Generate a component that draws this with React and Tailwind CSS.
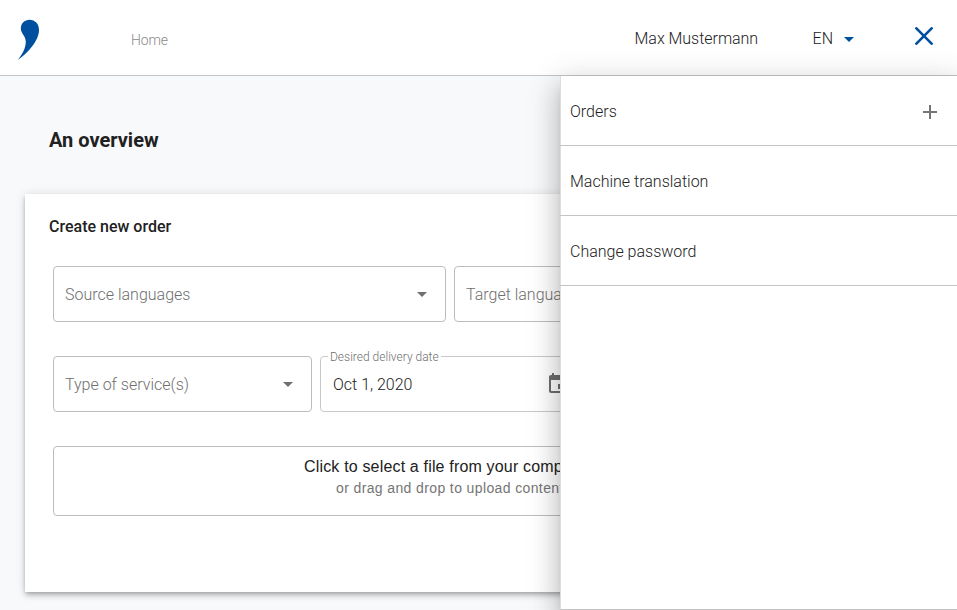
const Caret = ({ className }) => (
  <svg viewBox="0 0 10 5" width="10" height="5" className={className} fill="currentColor">
    <path d="M0 0h10L5 5z" />
  </svg>
);

const SelectField = ({ label, className }) => (
  <div className={`flex h-14 shrink-0 items-center justify-between rounded border border-[#bdbdbd] pr-[18px] pl-[11px] text-[#6f6f6f] ${className}`}>
    <span className="pt-0.5 whitespace-nowrap">{label}</span>
    <Caret className="shrink-0" />
  </div>
);

const MenuItem = ({ label, children }) => (
  <li className="-ml-px flex h-[70px] items-center justify-between border-b border-[#c4c4c4] pr-5 pl-2.5">
    <span className="pt-0.5">{label}</span>
    {children}
  </li>
);

export default function App() {
  return (
    <div className="relative h-[610px] w-[957px] overflow-hidden bg-[#f8f9fb] font-['Roboto',sans-serif] text-base leading-6 font-light text-[#212121]">
      <header className="flex h-[76px] items-center border-b border-[#c4c4c4] bg-white">
        <svg viewBox="0 0 22 42" width="22" height="42" className="ml-[17px] mt-[5px] shrink-0" fill="#0050a0">
          <path d="M12.500 .8C7.500 .8 3.800 4.500 3.800 9.500C3.800 14.500 8.600 16.500 8.800 22.500C8.800 29 5.500 35 .8 41C9.500 35 22 22.500 22 11C22 5 18 .8 12.500 .8z" />
        </svg>
        <nav className="ml-[92px] mt-[5px] text-sm leading-5 tracking-[-0.1px] text-[#8a8a8a]">Home</nav>
        <div className="ml-auto flex items-center pr-[24px]">
          <span className="mt-[3px] w-[124px] tracking-[-0.03px] whitespace-nowrap">Max Mustermann</span>
          <span className="mt-[3px] ml-[54px]">EN</span>
          <Caret className="mt-[3px] ml-[11px] text-[#0050a0]" />
          <svg viewBox="0 0 18 18" width="18" height="18" className="ml-[61px] -mt-[3px]" fill="none" stroke="#0050a0" strokeWidth="2.600">
            <path d="M.5 .5l17 17M17.500 .5L.5 17.500" />
          </svg>
        </div>
      </header>

      <main className="px-[25px]">
        <h1 className="pt-[50px] pl-6 text-xl leading-7 font-bold">An overview</h1>
        <section className="mt-10 h-[398px] bg-white px-7 pt-[21px] shadow-[0_2px_4px_-1px_rgba(0,0,0,0.2),0_4px_5px_0_rgba(0,0,0,0.14),0_1px_10px_0_rgba(0,0,0,0.12)]">
          <h2 className="-ml-1 font-medium">Create new order</h2>
          <div className="mt-[27px] flex gap-2">
            <SelectField label="Source languages" className="w-[393px]" />
            <SelectField label="Target languages" className="w-[393px]" />
          </div>
          <div className="mt-[34px] flex gap-2">
            <SelectField label="Type of service(s)" className="w-[259px]" />
            <div className="relative flex h-14 w-[259px] items-center justify-between rounded border border-[#c8c8c8] pr-2 pl-3">
              <span className="absolute -top-2 left-[7px] bg-white px-0.5 text-xs leading-4 text-[#6f6f6f]">Desired delivery date</span>
              <span className="pt-0.5">Oct 1, 2020</span>
              <svg viewBox="0 0 24 24" width="24" height="24" fill="#6f6f6f" className="shrink-0">
                <path d="M17 12h-5v5h5v-5zM16 1v2H8V1H6v2H5c-1.110 0-1.990.9-1.990 2L3 19c0 1.100.89 2 2 2h14c1.100 0 2-.9 2-2V5c0-1.100-.9-2-2-2h-1V1h-2zm3 18H5V8h14v11z" />
              </svg>
            </div>
          </div>
          <div className="mt-[34px] h-[70px] w-[794px] rounded border border-[#bdbdbd] pt-2 font-['Liberation_Sans',Arial,sans-serif] font-normal">
            <p className="pl-[250px] tracking-[0.17px]">Click to select a file from your computer</p>
            <p className="-mt-px pl-[282px] text-sm leading-5 tracking-[0.38px] text-[#757575]">or drag and drop to upload content</p>
          </div>
        </section>
      </main>

      <aside className="absolute top-[76px] right-0 h-[534px] w-[397px] border-b border-l border-b-[#c4c4c4] border-l-[#dddddd] bg-white shadow-[0_8px_10px_-5px_rgba(0,0,0,0.2),0_16px_24px_2px_rgba(0,0,0,0.14),0_6px_30px_5px_rgba(0,0,0,0.12)]">
        <ul>
          <MenuItem label="Orders">
            <svg viewBox="0 0 14 14" width="14" height="14" className="mt-[3px]" stroke="#757575" strokeWidth="2">
              <path d="M7 0v14M0 7h14" />
            </svg>
          </MenuItem>
          <MenuItem label="Machine translation" />
          <MenuItem label="Change password" />
        </ul>
      </aside>
    </div>
  );
}
